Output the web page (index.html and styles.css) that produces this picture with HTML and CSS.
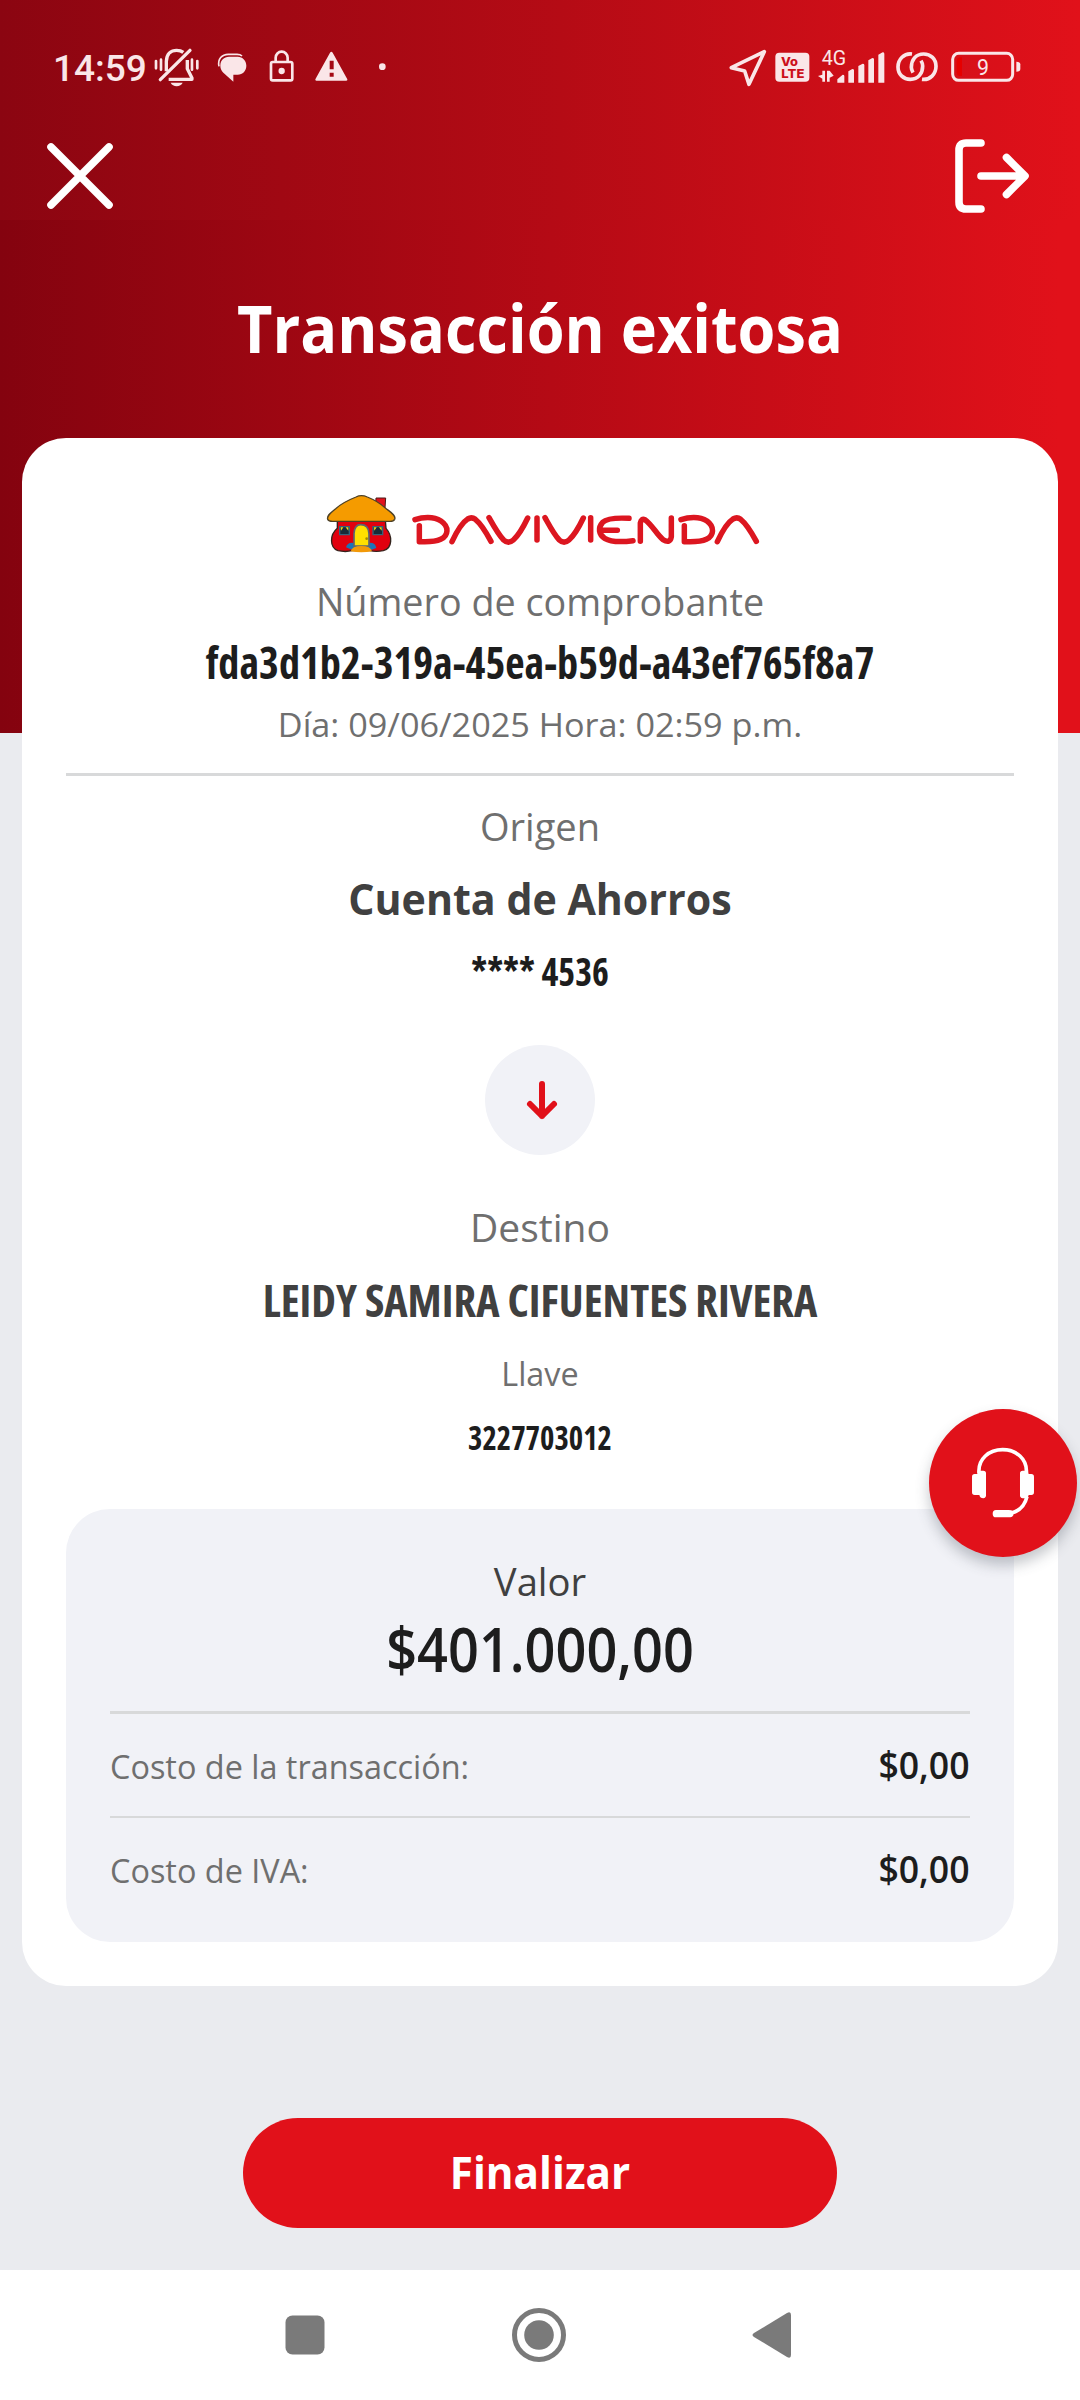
FILE: index.html
```
<!DOCTYPE html>
<html lang="es">
<head>
<meta charset="utf-8">
<title>Transacción exitosa</title>
<link rel="stylesheet" href="styles.css">
</head>
<body>
<div class="screen">
  <header class="status">
    <span class="clock">14:59</span>
    <svg class="s-bell" viewBox="460 70 142 135" fill="none" stroke="currentColor">
      <path d="M500 152V122C501 99 514 89 531 89c9 0 15 2 20 6M563 118v26l14 28v4h-70" stroke-width="10" stroke-linejoin="round"/>
      <path d="M482 177L571 89" stroke-width="10" stroke-linecap="round"/>
      <path d="M469 121v22M484 117v30M577 117v30M593 121v22" stroke-width="8" stroke-linecap="round"/>
      <path d="M513 186h36c-5 14-31 14-36 0z" fill="currentColor" stroke="none"/>
    </svg>
    <svg class="s-chat" viewBox="650 70 92 135" fill="currentColor">
      <path d="M686 108h26c15 0 26 12 26 27s-11 27-26 27h-13v21l-30-27c-6-6-9-13-9-21 0-16 11-27 26-27z"/>
      <path d="M656 137c-5-22 9-36 28-36h26c7 0 12 2 15 5" fill="none" stroke="currentColor" stroke-width="5"/>
    </svg>
    <svg class="s-lock" viewBox="808 70 76 135" fill="none" stroke="currentColor" stroke-width="8">
      <rect x="814" y="124" width="64" height="55" rx="5"/>
      <path d="M828 123v-12a18 18 0 0 1 36 0v12"/>
      <circle cx="846" cy="151" r="9.500" fill="currentColor" stroke="none"/>
    </svg>
    <svg class="s-warn" viewBox="946 70 98 135" fill="currentColor">
      <path fill-rule="evenodd" d="M995 93q2 0 4 3l44 80q1 4-3 4h-90q-4 0-3-4l44-80q2-3 4-3zM990 120v26h12v-26zM990 156v12h12v-12z"/>
    </svg>
    <svg class="s-dot" viewBox="1136 70 20 135" fill="currentColor"><circle cx="1146" cy="138" r="10"/></svg>
    <span class="spacer"></span>
    <svg class="s-nav" viewBox="86 70 112 135" fill="none" stroke="currentColor" stroke-width="11" stroke-linejoin="round"><path d="M192 93L93 141l40 10 13 40z"/></svg>
    <svg class="s-volte" viewBox="224 70 104 135">
      <rect x="225" y="96" width="102" height="87" rx="12" fill="currentColor"/>
      <text class="volte" x="242" y="135" textLength="51" lengthAdjust="spacingAndGlyphs">Vo</text>
      <text class="volte" x="243" y="171" textLength="69" lengthAdjust="spacingAndGlyphs">LTE</text>
    </svg>
    <svg class="s-signal" viewBox="355 70 201 135" fill="currentColor">
      <text class="net" x="366" y="132">4G</text>
      <path d="M368 150h8v33h-8v-9l-13-8 13-4zM382 183v-33h8l12 15-12 6v12zM413 176l16-14q5 0 5 4v20h-21zM446 152l12-7q5 0 5 4v37h-17zM476 136l13-7q5 0 5 4v53h-18zM506 119l12-7q5 0 5 4v70h-17zM536 102l13-7q5 0 5 4v87h-18z"/>
    </svg>
    <svg class="s-link" viewBox="588 70 126 135" fill="none" stroke="currentColor" stroke-width="11">
      <path d="M636 100c-24-3-42 16-42 39 0 22 16 37 37 37 24 0 37-18 37-40 0-6-2-11-5-16"/>
      <path d="M666 176c24 3 42-16 42-39 0-22-16-37-37-37-24 0-37 18-37 40 0 6 2 11 5 16"/>
    </svg>
    <svg class="s-batt" viewBox="752 70 210 135">
      <rect x="757" y="98" width="180" height="81" rx="18" fill="none" stroke="currentColor" stroke-width="9"/>
      <path d="M785 110h-8q-8 2-8 10v36q0 8 8 10h8z" fill="#e60000"/>
      <path d="M948 123q12 0 12 8v14q0 8-12 8z" fill="currentColor"/>
      <text class="level" x="848" y="164" text-anchor="middle">9</text>
    </svg>
  </header>

  <nav class="toolbar">
    <svg class="close" viewBox="0 0 66 66"><path d="M4 4l58 58M62 4L4 62"/></svg>
    <svg class="exit" viewBox="0 0 74 74"><path d="M26 4H11q-7 0-7 7v52q0 7 7 7h15M26 37h42M51.500 18.500L70 37 51.500 55.500"/></svg>
  </nav>

  <h1 class="title">Transacción exitosa</h1>

  <main class="card">
    <svg class="logo" viewBox="0 48 1440 255">
      <path d="M228 84h29l-2 30-10 4-18-16z" fill="#e1111c" stroke="#4a1a18" stroke-width="3"/>
      <path d="M112 150h144l2 25c20 22 20 60-8 67-14 3-28 3-40 0h-54c-12 3-28 3-42 0-26-9-25-48-2-67z" fill="#e1000f" stroke="#33231c" stroke-width="4"/>
      <path d="M138 232q5-17 24-13h42q22-3 25 15-44 22-91-2z" fill="#1b74b8"/>
      <path d="M162 228v-38q2-26 20-26 24 0 25 27v37z" fill="#ffe000" stroke="#5e6570" stroke-width="5"/>
      <circle cx="200" cy="206" r="4" fill="#a18a00"/>
      <path d="M152 244q4-16 32-16t32 16q-32 6-64 0z" fill="#f39a08"/>
      <path d="M119 170h29v24h-29zM219 170h29v24h-29z" fill="#182b38" stroke="#33647c" stroke-width="4"/>
      <path d="M122 172h8l-7 10zM137 172h8v10zM222 172h8l-7 10zM237 172h8v10z" fill="#f2dc12"/>
      <path d="M83 148c-3-12 10-20 24-32 20-18 46-29 61-35q16-8 34 0c20 8 40 20 54 33 15 12 33 22 28 34q-3 6-14 6H98q-12 0-15-6z" fill="#f59b00" stroke="#4d4127" stroke-width="4"/>
      <g class="wordmark">
        <path d="M345 149C366 142 400 138 423 153C448 170 446 196 422 208C403 217 377 216 358 215V167"/>
        <path d="M456 215C470 185 487 157 503 147Q515 140 526 148C545 163 559 188 573 214"/>
        <path d="M567 143C582 170 596 195 611 210Q625 223 640 210C658 194 671 169 683 144"/>
        <path d="M711 144V210"/>
        <path d="M735 143C750 170 763 195 778 210Q792 223 807 210C825 194 838 169 850 144"/>
        <path d="M872 143V210"/>
        <path d="M987 145C950 143 922 144 908 157C893 173 896 194 914 205C934 217 968 216 999 212M902 181H952"/>
        <path d="M1021 214V159Q1024 144 1035 149C1055 163 1071 194 1089 209Q1110 222 1114 200V144"/>
        <path d="M1143 149C1164 142 1198 138 1221 153C1244 170 1243 196 1219 208C1200 217 1174 216 1153 215V167"/>
        <path d="M1252 215C1266 185 1283 157 1299 147Q1311 140 1322 148C1341 163 1355 188 1369 214"/>
      </g>
    </svg>
    <p class="line label receipt-label">Número de comprobante</p>
    <p class="line receipt-id">fda3d1b2-319a-45ea-b59d-a43ef765f8a7</p>
    <p class="line date">Día: 09/06/2025 Hora: 02:59 p.m.</p>
    <hr class="rule">
    <p class="line label origin">Origen</p>
    <p class="line account">Cuenta de Ahorros</p>
    <p class="line account-no">**** 4536</p>
    <div class="arrow"><svg viewBox="0 0 30 38"><path d="M15 3v32M3 23l12 12 12-12"/></svg></div>
    <p class="line label">Destino</p>
    <p class="line payee">LEIDY SAMIRA CIFUENTES RIVERA</p>
    <p class="line key-label">Llave</p>
    <p class="line key">3227703012</p>

    <section class="amounts">
      <p class="line label value-label">Valor</p>
      <p class="line value">$401.000,00</p>
      <div class="cost first"><span class="cost-name">Costo de la transacción:</span><span class="cost-value">$0,00</span></div>
      <div class="cost"><span class="cost-name">Costo de IVA:</span><span class="cost-value">$0,00</span></div>
    </section>
  </main>

  <button class="finish"><span>Finalizar</span></button>

  <footer class="navbar">
    <svg viewBox="0 0 54 54"><rect x="7.500" y="7.500" width="39" height="39" rx="7"/></svg>
    <svg viewBox="0 0 54 54"><circle cx="27" cy="27" r="24.500" fill="none" stroke="#7a7a7a" stroke-width="5"/><circle cx="27" cy="27" r="14.800"/></svg>
    <svg viewBox="0 0 54 54"><path d="M9 25L42 5q4-2 4 2v40q0 4-4 2L9 29q-3-2 0-4z"/></svg>
  </footer>

  <div class="help">
    <svg viewBox="0 0 186 208" fill="none" stroke="#fff">
      <path d="M21 76C17 32 52 5 92 5s75 27 71 71M165 146c-6 26-20 42-46 49" stroke-width="11"/>
      <path d="M8 78h8q2-10 10-10h8q8 0 8 8v66q0 8-8 9-10 0-12-10H8q-8 0-8-8V86q0-8 8-8zM178 78h-8q-2-10-10-10h-8q-8 0-8 8v66q0 8 8 9h8q8 0 10-10h8q8 0 8-8V86q0-8-8-8zM72 186h38q8 0 14 4v12q-3 6-9 6H72q-10 0-10-11t10-11z" fill="#fff" stroke="none"/>
    </svg>
  </div>
</div>
</body>
</html>
```
FILE: styles.css
```
* { box-sizing: border-box; }

body {
  margin: 0;
  font-family: "Open Sans", "Noto Sans", sans-serif;
  color: #1d1d1d;
}

.screen {
  position: relative;
  display: flex;
  flex-direction: column;
  width: 1080px;
  height: 2400px;
  overflow: hidden;
  background:
    linear-gradient(90deg, #8b0511, #b50b15 52%, #e1111a) 0 0 / 100% 220px no-repeat,
    linear-gradient(90deg, #84030f, #b50a15 51%, #e1111a 98%) 0 0 / 100% 733px no-repeat,
    #eaebef;
}

svg { display: block; flex: none; overflow: visible; }

/* system status bar */
.status {
  display: flex;
  align-items: center;
  height: 132px;
  padding: 0 59.3px 0 53px;
  color: #fae6e8;
}
.status svg { height: 45px; }
.clock {
  width: 100.3px;
  font: 500 37px/45px Roboto, sans-serif;
  padding-top: 4px;
}
.spacer { flex: 1; }
.s-bell { width: 47.3px; }
.s-chat { width: 30.7px; margin-left: 16px; }
.s-lock { width: 25.3px; margin-left: 22px; }
.s-warn { width: 32.7px; margin-left: 20.7px; }
.s-dot { width: 6.7px; margin-left: 30.7px; }
.s-nav { width: 37.3px; }
.s-volte { width: 34.7px; margin-left: 8.7px; }
.s-signal { width: 67px; margin-left: 9px; }
.s-link { width: 42px; margin-left: 10.7px; }
.s-batt { width: 70px; margin-left: 12.7px; }
.volte { font: 800 37px Inter, sans-serif; fill: #cc0f1b; }
.net { font: 400 59px Roboto, sans-serif; fill: currentColor; }
.level { font: 400 64px Roboto, sans-serif; fill: currentColor; }

.toolbar {
  display: flex;
  justify-content: space-between;
  align-items: center;
  height: 88px;
  padding: 0 51px 0 47px;
}
.toolbar svg { fill: none; stroke: #fff; stroke-width: 7.6; stroke-linecap: round; stroke-linejoin: round; }
.close { width: 66px; height: 66px; }
.exit { width: 74px; height: 74px; }

.title {
  margin: 57px 0 61px;
  font-size: 67px;
  line-height: 100px;
  font-weight: 700;
  color: #fff;
  text-align: center;
  transform: scaleX(0.914);
}

.card {
  height: 1548px;
  margin: 0 22px;
  padding: 48px 44px 44px;
  border-radius: 44px;
  background: #fff;
}
.logo { width: 480px; height: 85px; margin: 0 0 0 234px; }
.wordmark { fill: none; stroke: #dc1620; stroke-width: 16.5; stroke-linecap: round; stroke-linejoin: round; }

.line { margin: 0; text-align: center; white-space: nowrap; }
.label { font-size: 39px; line-height: 60px; color: #6f6f6f; }
.receipt-label { transform: scaleX(0.967); }
.receipt-id { font-size: 44px; line-height: 62px; font-weight: 700; font-stretch: 75%; transform: scaleX(0.96); }
.date { padding-top: 1px; font-size: 33px; line-height: 61px; color: #6f6f6f; transform: scaleX(1.037); }
.rule { height: 3px; margin: 18px 0 20px; border: 0; background: #d8d9da; }
.origin { transform: scaleX(0.976); }
.account { padding-top: 1px; font-size: 43.5px; line-height: 83px; font-weight: 700; color: #404040; transform: scaleX(0.946); }
.account-no { font-size: 39px; line-height: 62px; font-weight: 700; font-stretch: 75%; transform: scaleX(0.92); }
.arrow {
  display: flex;
  align-items: center;
  justify-content: center;
  width: 110px;
  height: 110px;
  margin: 43px auto 42px;
  padding-left: 3px;
  border-radius: 50%;
  background: #f1f2f7;
}
.arrow svg { width: 30px; height: 38px; fill: none; stroke: #e1111a; stroke-width: 6; stroke-linecap: round; stroke-linejoin: round; }
.payee { font-size: 44px; line-height: 86px; font-weight: 700; font-stretch: 75%; color: #404040; transform: scaleX(1.006); }
.key-label { padding-top: 1px; font-size: 33px; line-height: 59px; color: #6f6f6f; transform: scaleX(0.98); }
.key { font-size: 33px; line-height: 70px; font-weight: 700; font-stretch: 75%; transform: scaleX(0.93); }

.amounts {
  height: 433px;
  margin-top: 36px;
  padding: 42px 44px 0;
  border-radius: 44px;
  background: #f1f2f7;
}
.value-label { color: #404040; transform: scaleX(0.98); }
.value { margin-bottom: 26px; font-size: 61.5px; line-height: 74px; font-weight: 600; transform: scaleX(0.879); }
.cost {
  display: flex;
  justify-content: space-between;
  align-items: baseline;
  height: 104px;
  border-top: 2px solid #d8d9da;
  line-height: 100px;
}
.cost.first { height: 105px; border-top-width: 3px; }
.cost-name { font-size: 33px; color: #6f6f6f; transform: scaleX(0.982); transform-origin: left; }
.cost-value { font-size: 38.5px; font-weight: 600; transform: scaleX(0.925); transform-origin: right; }

.finish {
  align-self: center;
  width: 594px;
  height: 110px;
  margin: 132px 0 42px;
  padding: 0 0 2px;
  border: 0;
  border-radius: 55px;
  background: #e1111a;
  color: #fff;
  font: 700 44px "Open Sans", "Noto Sans", sans-serif;
}
.finish span { display: inline-block; transform: scaleX(0.96); }

.navbar {
  display: flex;
  justify-content: space-between;
  align-items: center;
  height: 130px;
  padding: 0 281px 0 278px;
  background: #fff;
}
.navbar svg { width: 54px; height: 54px; fill: #7a7a7a; }

/* floating support button */
.help {
  position: absolute;
  left: 929px;
  top: 1409px;
  display: flex;
  align-items: center;
  justify-content: center;
  width: 148px;
  height: 148px;
  border-radius: 50%;
  background: #e1111a;
  box-shadow: 0 8px 14px rgba(60, 65, 80, 0.3);
}
.help svg { width: 62px; height: 69.3px; }
```
